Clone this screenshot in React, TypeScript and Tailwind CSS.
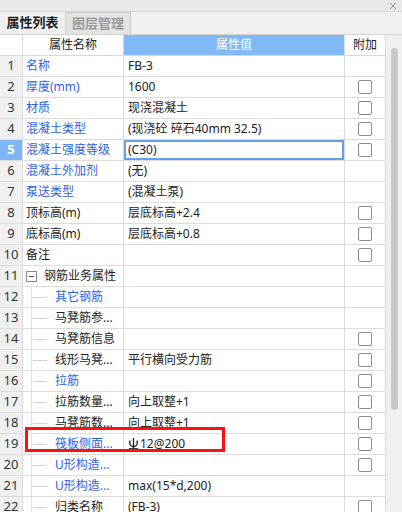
import React from 'react';

type Row = {
  name: string;
  value?: string;
  blue?: boolean;
  check?: boolean;
  child?: boolean;
  group?: boolean;
  rebar?: boolean;
};

const rows: Row[] = [
  { name: '名称', value: 'FB-3', blue: true },
  { name: '厚度(mm)', value: '1600', blue: true, check: true },
  { name: '材质', value: '现浇混凝土', blue: true, check: true },
  { name: '混凝土类型', value: '(现浇砼 碎石40mm 32.5)', blue: true, check: true },
  { name: '混凝土强度等级', value: '(C30)', blue: true, check: true },
  { name: '混凝土外加剂', value: '(无)', blue: true },
  { name: '泵送类型', value: '(混凝土泵)', blue: true },
  { name: '顶标高(m)', value: '层底标高+2.4', check: true },
  { name: '底标高(m)', value: '层底标高+0.8', check: true },
  { name: '备注', check: true },
  { name: '钢筋业务属性', group: true },
  { name: '其它钢筋', blue: true, child: true },
  { name: '马凳筋参...', child: true },
  { name: '马凳筋信息', child: true, check: true },
  { name: '线形马凳...', value: '平行横向受力筋', child: true, check: true },
  { name: '拉筋', blue: true, child: true, check: true },
  { name: '拉筋数量...', value: '向上取整+1', child: true, check: true },
  { name: '马凳筋数...', value: '向上取整+1', child: true, check: true },
  { name: '筏板侧面...', value: '12@200', blue: true, child: true, check: true, rebar: true },
  { name: 'U形构造...', blue: true, child: true, check: true },
  { name: 'U形构造...', value: 'max(15*d,200)', blue: true, child: true },
  { name: '归类名称', value: '(FB-3)', child: true, check: true },
];

const SELECTED = 5;

function Checkbox() {
  return <span className="w-[14px] h-[14px] rounded-[2px] border border-[#8c8c8c] bg-white" />;
}

// grade III rebar mark
function RebarMark() {
  return (
    <svg width="11" height="13" viewBox="0 0 11 13" className="mr-[1px] mb-[1px]" fill="none" stroke="#1a1a1a" strokeWidth="1.3">
      <path d="M5.5 1 V11.5" />
      <path d="M1.8 3.5 V6.2 a3.7 3.4 0 0 0 7.4 0 V3.5" />
      <path d="M0.8 11.8 H10.2" />
    </svg>
  );
}

export default function App() {
  return (
    <div className="relative w-[402px] h-[512px] overflow-hidden bg-[#f0f0f0] text-[12px] text-[#222] font-['Noto_Sans','Noto_Sans_CJK_SC',sans-serif]">
      {/* title strip */}
      <div className="h-[12px] bg-[#e9e9e9] border-b border-[#d6d6d6] flex justify-end items-center pr-[5px]">
        <svg width="8" height="8" viewBox="0 0 8 8" stroke="#9a9a9a" strokeWidth="1">
          <path d="M1 1 L7 7 M7 1 L1 7" />
        </svg>
      </div>

      {/* tabs */}
      <div className="h-[22px] flex items-stretch">
        <div className="w-[65px] flex items-center justify-center font-bold text-[13px] text-[#222]">属性列表</div>
        <div className="w-[66px] flex items-center justify-center font-bold text-[13px] text-[#9a9a9a] bg-[#e3e3e3] border border-b-0 border-[#cfcfcf]">
          图层管理
        </div>
      </div>

      <div className="flex border-t border-[#d4d4d4]">
        <div className="w-[386px] bg-white">
          {/* header */}
          <div className="grid grid-cols-[23px_101px_221px_41px] h-[21px] border-b border-[#d9d9d9]">
            <div className="border-r border-[#d9d9d9]" />
            <div className="border-r border-[#d9d9d9] flex items-center justify-center">属性名称</div>
            <div className="border-r border-[#d9d9d9] bg-[#80b9f6] text-white flex items-center justify-center">属性值</div>
            <div className="border-r border-[#d9d9d9] flex items-center justify-center">附加</div>
          </div>

          {rows.map((r, i) => {
            const n = i + 1;
            const sel = n === SELECTED;
            return (
              <div key={n} className="grid grid-cols-[23px_101px_221px_41px] h-[21px] border-b border-[#dcdcdc]">
                <div
                  className={
                    sel
                      ? 'border-r border-[#d9d9d9] bg-[#7eb7f5] text-white font-bold text-[13px] flex items-center justify-center'
                      : 'border-r border-[#d9d9d9] bg-[#f0f0f0] text-[13px] text-[#333] flex items-center justify-center'
                  }
                >
                  {n}
                </div>
                <div className={`border-r border-[#d9d9d9] flex items-center whitespace-nowrap overflow-hidden ${r.blue ? 'text-[#2e5fe3]' : 'text-[#222]'}`}>
                  {r.child ? (
                    <>
                      <span className="ml-[8px] self-stretch w-px bg-[#e4e4e4]" />
                      <span className="ml-[1px] w-[14px] h-px bg-[#d2d2d2]" />
                      <span className="ml-[8px]">{r.name}</span>
                    </>
                  ) : r.group ? (
                    <>
                      <span className="ml-[3px] w-[11px] h-[11px] border border-[#8a8a8a] flex items-center justify-center">
                        <span className="w-[5px] h-px bg-[#555]" />
                      </span>
                      <span className="ml-[7px]">{r.name}</span>
                    </>
                  ) : (
                    <span className="ml-[3px]">{r.name}</span>
                  )}
                </div>
                <div
                  className={`border-r border-[#d9d9d9] flex items-center pl-[4px] whitespace-nowrap overflow-hidden ${
                    sel ? 'shadow-[inset_0_0_0_2px_#62a0e8]' : ''
                  }`}
                >
                  {r.rebar && <RebarMark />}
                  {r.value}
                </div>
                <div className="border-r border-[#d9d9d9] flex items-center justify-center">{r.check && <Checkbox />}</div>
              </div>
            );
          })}
        </div>

        {/* scrollbar */}
        <div className="flex-1 bg-[#f0f0f0] pt-[13px] flex justify-center">
          <div className="w-[7px] h-[362px] rounded-full bg-[#c8c8c8]" />
        </div>
      </div>

      {/* annotation */}
      <div className="absolute left-[25px] top-[427px] w-[200px] h-[25px] border-[3px] border-[#ff1010]" />
    </div>
  );
}
